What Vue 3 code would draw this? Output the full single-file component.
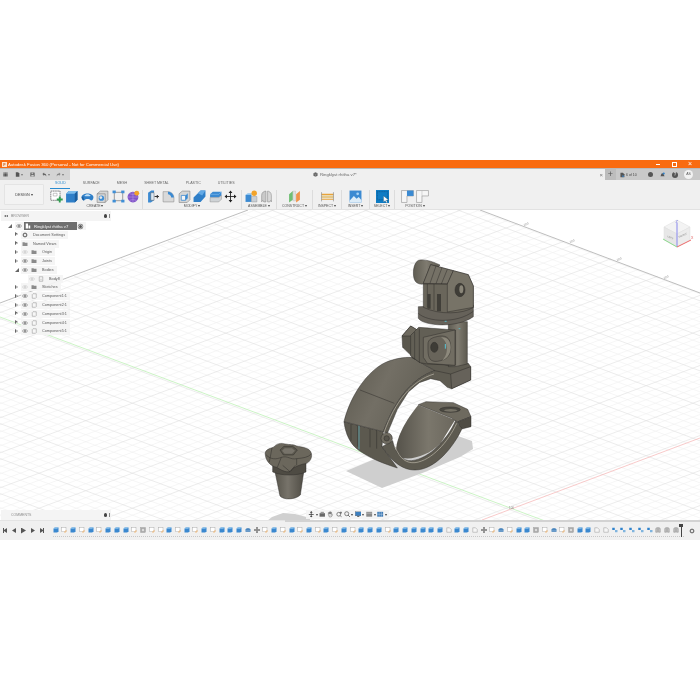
<script setup>
const tabs = ['SOLID', 'SURFACE', 'MESH', 'SHEET METAL', 'PLASTIC', 'UTILITIES']

const groups = [
  { label: 'CREATE', w: 95, icons: ['i-new', 'i-extrude', 'i-dome', 'i-hole', 'i-rect', 'i-sphere'] },
  { label: 'MODIFY', w: 99, icons: ['i-press', 'i-fillet', 'i-shell', 'i-chamfer', 'i-stack', 'i-move'] },
  { label: 'ASSEMBLE', w: 35, icons: ['i-asm', 'i-joint'] },
  { label: 'CONSTRUCT', w: 36, icons: ['i-plane'] },
  { label: 'INSPECT', w: 29, icons: ['i-measure'] },
  { label: 'INSERT', w: 28, icons: ['i-image'] },
  { label: 'SELECT', w: 25, icons: ['i-select'] },
  { label: 'POSITION', w: 40, icons: ['i-pos1', 'i-pos2'] },
]

const tree = [
  { name: 'Document Settings', arrow: 'closed', icon: 'i-gear' },
  { name: 'Named Views', arrow: 'closed', icon: 'i-folder' },
  { name: 'Origin', arrow: 'closed', eye: 'off', icon: 'i-folder' },
  { name: 'Joints', arrow: 'closed', eye: 'on', icon: 'i-folder' },
  { name: 'Bodies', arrow: 'open', eye: 'on', icon: 'i-folder' },
  { name: 'Body8', arrow: 'none', eye: 'off', icon: 'i-body', nested: true },
  { name: 'Sketches', arrow: 'closed', eye: 'off', icon: 'i-folder' },
  { name: 'Component1:1', arrow: 'closed', eye: 'on', icon: 'i-comp' },
  { name: 'Component2:1', arrow: 'closed', eye: 'on', icon: 'i-comp' },
  { name: 'Component3:1', arrow: 'closed', eye: 'on', icon: 'i-comp' },
  { name: 'Component4:1', arrow: 'closed', eye: 'on', icon: 'i-comp' },
  { name: 'Component5:1', arrow: 'closed', eye: 'on', icon: 'i-comp' },
]

const timelineCodes = 'bsbsbsbbbsgssbsbsbsbbb' + 'fmsbsbsbsbsbsbbbsbbbbbbdbbd' + 'msfsbbgsfsgbbddcccccjjj'
const timeline = timelineCodes.split('').map((c) => 't-' + c)

const navIcons = [
  { id: 'n-orbit', caret: true },
  { id: 'n-cam' },
  { id: 'n-hand' },
  { id: 'n-zoomfit' },
  { id: 'n-zoom', caret: true },
  { id: 'n-display', caret: true },
  { id: 'n-visual', caret: true },
  { id: 'n-grid', caret: true },
]

const step = 9.34
const slope = 0.375
let minor = ''
let major = ''
const seg = (x, y, dx) => `M${x.toFixed(1)} ${y.toFixed(1)}L${(x + dx).toFixed(1)} ${(y + Math.abs(dx) * slope).toFixed(1)}`
for (let n = -32; n <= 41; n++) {
  const t = 385 - n * step
  const s = seg(366 - t, 167 + slope * t, 1500)
  if (((n % 5) + 5) % 5 === 0) major += s
  else minor += s
}
for (let n = -14; n <= 56; n++) {
  const t = 525 - n * step
  const s = seg(366 + t, 167 + slope * t, -1500)
  if (((n % 5) + 5) % 5 === 0) major += s
  else minor += s
}

const ticks = [
  { x: 524, y: 226 },
  { x: 570, y: 243 },
  { x: 617, y: 261 },
  { x: 664, y: 279 },
]
</script>

<template>
  <div class="app">
    <header class="titlebar">
      <span class="logo">F</span>
      <span class="title-text">Autodesk Fusion 360 (Personal - Not for Commercial Use)</span>
      <span class="winbtn win-min"></span>
      <span class="winbtn win-max"></span>
      <span class="winbtn win-close">×</span>
    </header>

    <div class="docbar">
      <div class="quick">
        <svg class="qi"><use href="#q-grid" /></svg>
        <svg class="qi qi-doc"><use href="#q-doc" /></svg>
        <span class="caret"></span>
        <svg class="qi qi-save"><use href="#q-save" /></svg>
        <svg class="qi qi-undo"><use href="#q-undo" /></svg>
        <span class="caret"></span>
        <svg class="qi qi-redo"><use href="#q-redo" /></svg>
        <span class="caret"></span>
      </div>
      <div class="doctab">
        <svg class="doc-ico"><use href="#q-cube" /></svg>
        <span class="doc-name">Ringklyst rhitha v7*</span>
        <span class="doc-close">×</span>
      </div>
      <div class="account">
        <span class="plus">+</span>
        <svg class="ai ai-job"><use href="#q-jobs" /></svg>
        <span class="count">6 of 10</span>
        <span class="ai-dot"></span>
        <svg class="ai ai-bell"><use href="#q-bell" /></svg>
        <span class="ai-help">?</span>
        <span class="avatar">AS</span>
      </div>
    </div>

    <div class="ribbon">
      <button class="design">DESIGN <i class="caret dark"></i></button>
      <div class="ribbon-main">
        <div class="tabs">
          <span v-for="(t, i) in tabs" :key="t" class="tab" :class="{ active: i === 0 }">{{ t }}</span>
        </div>
        <div class="groups">
          <div v-for="g in groups" :key="g.label" class="group" :style="{ width: g.w + 'px' }">
            <div class="group-icons">
              <svg v-for="ic in g.icons" :key="ic" class="tool" viewBox="0 0 24 24"><use :href="'#' + ic" /></svg>
            </div>
            <div class="group-label">{{ g.label }} <i class="caret dark"></i></div>
          </div>
        </div>
      </div>
    </div>

    <main class="viewport">
      <svg class="scene" viewBox="0 210 700 310" width="700" height="310">
        <defs>
          <linearGradient id="gBand" x1="0" y1="0" x2="1" y2="0.4">
            <stop offset="0" stop-color="#5b584e" />
            <stop offset="0.5" stop-color="#736f65" />
            <stop offset="1" stop-color="#625f55" />
          </linearGradient>
          <linearGradient id="gInner" x1="0" y1="0" x2="1" y2="0">
            <stop offset="0" stop-color="#55524a" />
            <stop offset="0.55" stop-color="#7b776c" />
            <stop offset="1" stop-color="#6b675d" />
          </linearGradient>
          <linearGradient id="gCyl" x1="0" y1="0" x2="1" y2="0">
            <stop offset="0" stop-color="#5f5c52" />
            <stop offset="0.5" stop-color="#7f7b70" />
            <stop offset="1" stop-color="#5d5a50" />
          </linearGradient>
          <linearGradient id="gCone" x1="0" y1="0" x2="1" y2="0">
            <stop offset="0" stop-color="#57544b" />
            <stop offset="0.45" stop-color="#77736a" />
            <stop offset="1" stop-color="#4f4c44" />
          </linearGradient>

          <symbol id="i-new" viewBox="0 0 24 24"><rect x="1.5" y="2" width="17" height="17" fill="#fff" stroke="#555" stroke-width="1.3" stroke-dasharray="3 1" /><path d="M6 6h7v5H6z" fill="none" stroke="#999" /><path d="M18 12v11M12.5 17.500h11" stroke="#2f9e4f" stroke-width="3.400" /></symbol>
          <symbol id="i-extrude" viewBox="0 0 24 24"><path d="M2 7 7 2h16v16l-5 5H2z" fill="#2f7fc8" /><path d="M2 7 7 2h16l-5 5z" fill="#7cbcec" /><path d="M18 7l5-5v16l-5 5z" fill="#1c5f9f" /></symbol>
          <symbol id="i-dome" viewBox="0 0 24 24"><path d="M1 13C2 4 22 4 23 13c0 6-4 7-5 6-3-3-9-3-12 0-1 1-5 0-5-6z" fill="#2f7fc8" /><path d="M6 11c3-4 9-4 12 0-3 1-9 1-12 0z" fill="#bfe0f7" /><path d="M1 13c1 5 4 7 5 6l-2-7z" fill="#1c5f9f" /></symbol>
          <symbol id="i-hole" viewBox="0 0 24 24"><path d="M2 7 8 2h14v16l-5 5H2z" fill="#d6d6d6" stroke="#777" /><path d="M2 7h15v16" fill="none" stroke="#777" /><ellipse cx="10" cy="15" rx="5" ry="5" fill="#3f8fd6" /><ellipse cx="9" cy="14" rx="2.500" ry="2.500" fill="#e8e8e8" /></symbol>
          <symbol id="i-rect" viewBox="0 0 24 24"><rect x="4" y="4" width="16" height="16" fill="none" stroke="#555" stroke-width="1" /><g fill="#3f8fd6"><rect x="1" y="1" width="6" height="5" /><rect x="17" y="1" width="6" height="5" /><rect x="1" y="18" width="6" height="5" /><rect x="17" y="18" width="6" height="5" /></g></symbol>
          <symbol id="i-sphere" viewBox="0 0 24 24"><circle cx="11" cy="13" r="10" fill="#8254c8" /><path d="M1 13h20M11 3v20M4 6c4 3 10 3 14 0M4 20c4-3 10-3 14 0" stroke="#b79ae6" fill="none" /><circle cx="18" cy="6" r="4.500" fill="#f2a32a" /></symbol>
          <symbol id="i-press" viewBox="0 0 24 24"><path d="M2 5 8 1h5v18l-6 4H2z" fill="#3b8ad2" /><path d="M7 5h6v14H7z" fill="#dbe9f5" stroke="#555" stroke-width=".8" /><path d="M14 12h8M19 9v6" stroke="#333" stroke-width="2" /></symbol>
          <symbol id="i-fillet" viewBox="0 0 24 24"><path d="M2 3h9c6 0 11 5 11 11v8H2z" fill="#d9d9d9" stroke="#888" /><path d="M11 3c6 0 11 5 11 11h-5c0-3-3-6-6-6z" fill="#3b8ad2" /></symbol>
          <symbol id="i-shell" viewBox="0 0 24 24"><path d="M2 7 8 2h14v16l-5 5H2z" fill="#d6d6d6" stroke="#777" /><path d="M6 10h8v9H6z" fill="#f5f5f5" stroke="#3b8ad2" stroke-width="1.500" /><path d="M14 10l4-4v9l-4 4z" fill="#3b8ad2" /></symbol>
          <symbol id="i-chamfer" viewBox="0 0 24 24"><path d="M1 14 9 6l5-5h9v11l-9 10H1z" fill="#2f7fc8" /><path d="M9 6l5-5h9l-6 9z" fill="#62a9e6" /></symbol>
          <symbol id="i-stack" viewBox="0 0 24 24"><path d="M2 8 7 3h16v7l-5 4H2z" fill="#3b8ad2" /><path d="M2 8h16l5-5" fill="none" stroke="#8bc2ee" /><path d="M2 14h16l5-4v7l-5 5H2z" fill="#cfd3d6" stroke="#888" stroke-width=".8" /></symbol>
          <symbol id="i-move" viewBox="0 0 24 24"><path d="M12 3v18M3 12h18" stroke="#222" stroke-width="1.600" /><path d="M12 1l3.500 4.500h-7zM12 23l3.500-4.500h-7zM1 12l4.500-3.500v7zM23 12l-4.500-3.500v7z" fill="#222" /></symbol>
          <symbol id="i-asm" viewBox="0 0 24 24"><path d="M1 9h11v13H1z" fill="#3b8ad2" /><path d="M12 12h10v10H12z" fill="#c9cfd5" stroke="#888" stroke-width=".7" /><path d="M1 9l4-3h8l-1 3z" fill="#8cc2ee" /><circle cx="17" cy="6" r="5" fill="#f2a32a" /></symbol>
          <symbol id="i-joint" viewBox="0 0 24 24"><path d="M3 22V10c0-6 5-8 8-8v20H7l-2-3z" fill="#c9c9c9" stroke="#888" /><path d="M21 22V10c0-6-5-8-7-8v20h4l2-3z" fill="#d9d9d9" stroke="#888" /></symbol>
          <symbol id="i-plane" viewBox="0 0 24 24"><path d="M2 8 9 2v16l-7 5z" fill="#6fbf73" /><path d="M9 2h5v18H9z" fill="#e2e2e2" stroke="#aaa" stroke-width=".6" /><path d="M15 8l7-6v16l-7 5z" fill="#f0934a" /></symbol>
          <symbol id="i-measure" viewBox="0 0 24 24"><path d="M1 8h22M1 17h22" stroke="#e8a33a" stroke-width="2" /><rect x="1" y="10" width="22" height="5" fill="#e5c98a" /><path d="M1 4v17M23 4v17" stroke="#777" /></symbol>
          <symbol id="i-image" viewBox="0 0 24 24"><rect x="1" y="1" width="22" height="22" fill="#3b8ad2" /><path d="M1 20 9 11l5 5 4-3 5 6v4H1z" fill="#dcecf8" /><circle cx="16" cy="7" r="2.500" fill="#a8d3f5" /></symbol>
          <symbol id="i-select" viewBox="0 0 24 24"><rect x="0" y="0" width="24" height="24" fill="#0f7cc4" /><rect x="2.500" y="3" width="19" height="15" fill="none" stroke="#0a4f83" stroke-dasharray="2 1" /><path d="M14 11v11l3-2.500 2 4 2-1-2-4h4z" fill="#fff" stroke="#333" stroke-width=".4" /></symbol>
          <symbol id="i-pos1" viewBox="0 0 24 24"><path d="M1 1h22v10H11v12H1z" fill="#f6f6f6" stroke="#888" /><path d="M11 1h12v10H11z" fill="#3b8ad2" /></symbol>
          <symbol id="i-pos2" viewBox="0 0 24 24"><path d="M1 1h22v10H11v12H1z" fill="#f6f6f6" stroke="#888" /><path d="M11 11V1" stroke="#bbb" /></symbol>

          <symbol id="i-gear" viewBox="0 0 24 24"><circle cx="12" cy="12" r="6.500" fill="none" stroke="#777" stroke-width="4" /><path d="M12 1v5M12 18v5M1 12h5M18 12h5M4 4l4 4M16 16l4 4M20 4l-4 4M8 16l-4 4" stroke="#777" stroke-width="3" /></symbol>
          <symbol id="i-folder" viewBox="0 0 24 24"><path d="M2 5h8l2 2h10v13H2z" fill="#8b8b8b" /></symbol>
          <symbol id="i-comp" viewBox="0 0 24 24"><path d="M5 6l3-3h13v15l-3 3H5z" fill="#f7f7f7" stroke="#888" stroke-width="2" /></symbol>
          <symbol id="i-body" viewBox="0 0 24 24"><path d="M5 3h14v18H5z" fill="#f7f7f7" stroke="#888" stroke-width="2" /><path d="M12 11v6" stroke="#888" stroke-width="2" /></symbol>
          <symbol id="i-eye" viewBox="0 0 24 24"><path d="M1 12c6-8 16-8 22 0-6 8-16 8-22 0z" fill="none" stroke="currentColor" stroke-width="2.500" /><circle cx="12" cy="12" r="4" fill="currentColor" /></symbol>
          <symbol id="i-docwhite" viewBox="0 0 24 24"><path d="M3 2h9v20H3z" fill="#fff" /><path d="M14 10h7v12h-7z" fill="#fff" /></symbol>

          <symbol id="t-b" viewBox="0 0 24 24"><path d="M2 7 7 2h15v15l-5 5H2z" fill="#3a88cf" /><path d="M2 7 7 2h15l-5 5z" fill="#8ec3ec" /></symbol>
          <symbol id="t-s" viewBox="0 0 24 24"><rect x="3" y="3" width="17" height="16" fill="#fff" stroke="#9a9a9a" stroke-width="1.500" /><path d="M20 12v8h-8" fill="none" stroke="#f0ae62" stroke-width="3" /></symbol>
          <symbol id="t-f" viewBox="0 0 24 24"><path d="M2 9c2-6 18-6 20 0v10H2z" fill="#3c7cb8" /><path d="M2 13h20" stroke="#b9d5ec" stroke-width="2" /></symbol>
          <symbol id="t-m" viewBox="0 0 24 24"><path d="M12 2v20M2 12h20" stroke="#333" stroke-width="2.500" /><path d="M12 0l4 5H8zM12 24l4-5H8zM0 12l5-4v8zM24 12l-5-4v8z" fill="#333" /></symbol>
          <symbol id="t-g" viewBox="0 0 24 24"><rect x="2" y="2" width="20" height="20" fill="#a9a9a9" stroke="#7b7b7b" /><circle cx="12" cy="12" r="5" fill="#dcdcdc" /></symbol>
          <symbol id="t-d" viewBox="0 0 24 24"><path d="M3 3h11l7 7v11H3z" fill="#f6f6f6" stroke="#7b7b7b" stroke-width="1.500" /></symbol>
          <symbol id="t-c" viewBox="0 0 24 24"><rect x="1" y="3" width="10" height="9" fill="#2f82cc" /><rect x="12" y="12" width="10" height="9" fill="#7fb4de" /></symbol>
          <symbol id="t-j" viewBox="0 0 24 24"><path d="M3 21V9c0-5 4-7 7-7v19zM21 21V9c0-5-4-7-7-7v19z" fill="#c2c2c2" stroke="#6f6f6f" stroke-width="1.500" /></symbol>

          <symbol id="n-orbit" viewBox="0 0 24 24"><path d="M12 3v18M3 13h18" stroke="#444" stroke-width="3" /><path d="M12 0l5 6H7zM12 24l-5-6h10z" fill="#444" /></symbol>
          <symbol id="n-cam" viewBox="0 0 24 24"><rect x="2" y="8" width="20" height="13" fill="#666" /><rect x="6" y="3" width="12" height="6" fill="#999" /></symbol>
          <symbol id="n-hand" viewBox="0 0 24 24"><path d="M5 13V6h3v5-7h3v7-8h3v8-6h3v9l2-2 2 2-6 9H9z" fill="#d8d8d8" stroke="#555" stroke-width="1.500" /></symbol>
          <symbol id="n-zoomfit" viewBox="0 0 24 24"><circle cx="10" cy="12" r="7" fill="none" stroke="#555" stroke-width="2.500" /><path d="M15 17l6 5M18 2v9M14 6h8" stroke="#555" stroke-width="2.500" /></symbol>
          <symbol id="n-zoom" viewBox="0 0 24 24"><circle cx="10" cy="10" r="7.500" fill="#eee" stroke="#555" stroke-width="2.500" /><path d="M15 15l7 7" stroke="#555" stroke-width="3" /></symbol>
          <symbol id="n-display" viewBox="0 0 24 24"><rect x="1" y="3" width="22" height="15" fill="#3b7fc0" stroke="#555" /><rect x="8" y="18" width="8" height="4" fill="#666" /></symbol>
          <symbol id="n-visual" viewBox="0 0 24 24"><rect x="1" y="3" width="22" height="18" fill="#8a8a8a" /><path d="M1 8h22" stroke="#d6d6d6" stroke-width="2" /></symbol>
          <symbol id="n-grid" viewBox="0 0 24 24"><rect x="1" y="3" width="22" height="18" fill="#3b78b4" /><path d="M8 3v18M16 3v18M1 12h22" stroke="#dbe8f3" stroke-width="1.500" /></symbol>

          <symbol id="q-grid" viewBox="0 0 24 24"><path d="M2 2h6v6H2zM9 2h6v6H9zM16 2h6v6h-6zM2 9h6v6H2zM9 9h6v6H9zM16 9h6v6h-6zM2 16h6v6H2zM9 16h6v6H9zM16 16h6v6h-6z" fill="#555" /></symbol>
          <symbol id="q-doc" viewBox="0 0 24 24"><path d="M4 1h11l6 6v16H4z" fill="#555" /></symbol>
          <symbol id="q-save" viewBox="0 0 24 24"><path d="M2 2h18l2 2v18H2z" fill="#555" /><rect x="7" y="3" width="9" height="6" fill="#ccc" /><rect x="6" y="13" width="12" height="9" fill="#ccc" /></symbol>
          <symbol id="q-undo" viewBox="0 0 24 24"><path d="M2 9l8-7v5c8 0 12 6 10 14-2-5-5-7-10-7v5z" fill="#666" /></symbol>
          <symbol id="q-redo" viewBox="0 0 24 24"><path d="M22 9l-8-7v5C6 7 2 13 4 21c2-5 5-7 10-7v5z" fill="#888" /></symbol>
          <symbol id="q-cube" viewBox="0 0 24 24"><path d="M12 1l10 5v12l-10 5-10-5V6z" fill="#666" /><path d="M12 12v11M2 6l10 6 10-6" stroke="#ddd" fill="none" /></symbol>
          <symbol id="q-jobs" viewBox="0 0 24 24"><path d="M2 1h12l7 7v15H2z" fill="#555" /><path d="M12 12l9 6-9 5z" fill="#3b8ad2" /></symbol>
          <symbol id="q-bell" viewBox="0 0 24 24"><path d="M12 3c5 0 7 4 7 9l3 6H2l3-6c0-5 2-9 7-9z" fill="#555" /><circle cx="18" cy="5" r="5" fill="#2f82cc" /></symbol>
        </defs>

        <path :d="minor" class="grid-minor" />
        <path :d="major" class="grid-major" />
        <path d="M0 317 L545 521" class="axis-green" />
        <path d="M482 520 L700 438" class="axis-red" />
        <path d="M0 303 L248 210" class="edge" />
        <path d="M480 210 L700 293" class="edge" />
        <text v-for="t in ticks" :key="t.x" :x="t.x" :y="t.y" class="tick" :transform="`rotate(-20 ${t.x} ${t.y})`">100</text>
        <text x="509" y="509" class="tick">100</text>

        <!-- floor shadows -->
        <path d="M346 471 382 488 425 472 460 457 473 449 472 441 458 436 420 440z" fill="#cfcfcf" />
        <path d="M267 521 272 517 283 513 295 514 310 518 310 521z" fill="#d0d0d0" />

        <!-- clamp and mount, drawn on a 3x grid -->
        <g transform="translate(340 250) scale(.33333)" stroke="#2b2a26" stroke-width="1.400" stroke-linejoin="round">
          <!-- inner wall -->
          <path d="M235 465C198 510 165 565 168 612 190 640 262 622 302 580L345 510z" fill="url(#gInner)" stroke="none" />
          <!-- lower arm tongue -->
          <path d="M235 464 258 455 340 458 383 478 393 500 352 516 334 504z" fill="#6e6a5f" />
          <ellipse cx="330" cy="479" rx="31" ry="8" fill="#4a4841" />
          <ellipse cx="332" cy="481" rx="20" ry="4" fill="#767266" stroke="none" />
          <path d="M393 500 393 530 365 537 352 516z" fill="#4f4c44" />
          <!-- lower left band -->
          <path d="M12 515 130 545 126 590 172 654C130 640 95 628 55 600 30 582 16 550 12 515z" fill="#5c594f" />
          <path d="M33 522V572M53 526V590M90 536V592M110 541V596" fill="none" />
          <path d="M57 524V598" stroke="#63c2d2" stroke-width="2" />
          <!-- front rim lower -->
          <path d="M126 590C160 640 190 660 225 660 285 660 340 592 366 536L347 512C320 570 270 625 215 632 190 635 165 610 158 572z" fill="#5d5a50" />
          <path d="M165 590C180 628 200 640 225 638 275 632 325 575 350 520" fill="none" stroke="#a9a598" stroke-width="2.500" />

          <!-- band outer -->
          <path d="M12 515C30 440 80 365 135 338 165 325 190 322 215 322L285 362C215 385 165 450 130 545z" fill="url(#gBand)" />
          <path d="M60 420 163 460" fill="none" />
          <!-- top arm -->
          <path d="M215 322 320 345 385 340 392 350 392 390 335 416 322 412 300 392 272 386 238 398 205 426 172 478 142 550 130 545C165 450 215 385 285 362z" fill="#5f5c52" />
          <path d="M335 416 332 372 392 350 392 390z" fill="#66625a" />
          <path d="M285 362 332 372" fill="none" />
          <path d="M132 548C165 455 215 392 282 372" fill="none" stroke="#a9a598" stroke-width="2.500" />
          <!-- hinge pin -->
          <circle cx="140" cy="565" r="17" fill="#6f6b60" />
          <circle cx="140" cy="565" r="8" fill="#57544b" />

          <!-- stem -->
          <path d="M325 215H382V342L345 350H325z" fill="url(#gCyl)" />
          <!-- side bracket -->
          <path d="M186 258 212 228 232 240 222 325 188 292z" fill="#5a574d" />
          <path d="M212 228 232 240 212 258 186 258z" fill="#6f6b60" />
          <path d="M212 256 236 232 346 240 346 346 262 342 240 338 212 318z" fill="#625f55" />
          <path d="M224 246V328M238 236V338" fill="none" />
          <path d="M250 262 345 240 345 346 262 340 250 322z" fill="#716d62" />
          <path d="M264 282C264 268 276 262 300 258 322 256 332 268 332 292 332 320 318 330 292 334 272 336 264 326 264 300z" fill="#68645a" />
          <path d="M302 262C322 270 330 310 306 332 320 326 332 315 332 292 332 272 322 260 302 262z" fill="#8d897c" stroke="none" />
          <ellipse cx="283" cy="292" rx="11" ry="15" fill="#3e3c36" />
          <path d="M316 282v14" stroke="#57c5d8" stroke-width="3" />

          <!-- collar -->
          <path d="M235 170V205C250 228 350 236 400 200V165z" fill="#66625a" />
          <path d="M235 190C262 216 350 222 400 184" fill="none" />
          <path d="M314 214h6M356 236h5" stroke="#57c5d8" stroke-width="2.500" />
          <!-- left cylinder -->
          <path d="M240 30C225 30 216 60 222 85 226 100 238 104 252 102L300 45C285 38 262 28 240 30z" fill="url(#gCyl)" />
          <!-- GoPro mount -->
          <path d="M250 100 272 44 385 74 400 108V172C370 192 300 196 250 172z" fill="#6a665b" />
          <path d="M272 44 340 62 322 102 250 100z" fill="#757166" />
          <path d="M288 48 270 100M306 53 288 101M322 58 304 102" fill="none" />
          <path d="M322 102 340 62 385 74 400 108V172L322 186z" fill="#777367" />
          <path d="M322 102H250M282 102V180M262 102V172" fill="none" />
          <path d="M262 132h10v44h-10zM291 132h12v52h-12z" fill="#413f39" stroke="none" />
          <ellipse cx="360" cy="120" rx="15" ry="20" fill="#3f3d37" />
          <ellipse cx="364" cy="118" rx="6" ry="12" fill="#8a8679" stroke="none" />
        </g>

        <!-- knob, drawn on a 3x grid -->
        <g transform="translate(240 440) scale(.33333)" stroke="#2b2a26" stroke-width="1.400" stroke-linejoin="round">
          <path d="M104 90 192 90 181 165C165 180 130 180 120 168z" fill="url(#gCone)" />
          <path d="M98 66H198V96C172 108 124 108 98 96z" fill="#4e4b43" />
          <path d="M76 45C72 30 90 25 100 22 110 10 125 8 135 12 150 15 160 12 170 18 185 22 210 22 214 40 218 58 205 72 190 72 170 78 160 82 150 95 135 98 120 88 110 82 95 80 78 65 76 45z" fill="#6b675c" />
          <path d="M78 44C92 60 110 58 124 52 145 46 150 60 170 56 190 54 205 52 214 42" fill="none" />
          <path d="M96 24 88 66M124 52 112 82M170 56V76M128 76 150 95 166 76" fill="none" />
          <path d="M120 30 132 19H158L172 30 160 45H130z" fill="#5a574d" />
          <path d="M126 32 134 25H156L165 32 156 41H134z" fill="#77736a" stroke="none" />
        </g>

        <!-- view cube -->
        <g class="cube">
          <path d="M664 227 677 220 690 227 677 234z" fill="#f3f3f3" stroke="#ddd" stroke-width=".5" />
          <path d="M664 227 677 234V247L664 240z" fill="#e7e7e7" stroke="#ddd" stroke-width=".5" />
          <path d="M690 227 677 234V247L690 240z" fill="#ececec" stroke="#ddd" stroke-width=".5" />
          <path d="M677 247V223" stroke="#a5a5ee" stroke-width="1.400" />
          <path d="M677 247 691 240" stroke="#ee6a6a" stroke-width="1" />
          <path d="M677 247 663 239" stroke="#8fdc8f" stroke-width="1" />
          <text x="675.500" y="223" class="cube-z">Z</text>
          <text x="691" y="239" class="cube-x">X</text>
          <text x="667" y="237" class="cube-t" transform="rotate(25 667 237)">LEFT</text>
          <text x="679" y="238" class="cube-t" transform="rotate(-25 679 238)">FRONT</text>
        </g>
      </svg>

      <aside class="panel browser">
        <div class="panel-head">
          <span class="collapse">◂◂</span>
          <span class="panel-title">BROWSER</span>
          <span class="dot"></span>
          <span class="bar"></span>
        </div>
        <div class="row root">
          <span class="tri-open dark"></span>
          <span class="pill">
            <svg class="ri eye on" viewBox="0 0 24 24"><use href="#i-eye" /></svg>
            <span class="root-box">
              <svg class="ri" viewBox="0 0 24 24"><use href="#i-docwhite" /></svg>
              <span>Ringklyst rhitha v7</span>
            </span>
            <span class="radio"></span>
          </span>
        </div>
        <div v-for="r in tree" :key="r.name" class="row" :class="{ nested: r.nested }">
          <span v-if="r.arrow === 'closed'" class="tri-closed"></span>
          <span v-else-if="r.arrow === 'open'" class="tri-open"></span>
          <span v-else class="tri-none"></span>
          <span class="pill">
            <svg v-if="r.eye" class="ri eye" :class="r.eye" viewBox="0 0 24 24"><use href="#i-eye" /></svg>
            <svg class="ri" :class="{ plain: !r.eye }" viewBox="0 0 24 24"><use :href="'#' + r.icon" /></svg>
            <span class="row-name">{{ r.name }}</span>
          </span>
        </div>
      </aside>

      <aside class="panel comments">
        <div class="panel-head">
          <span class="panel-title">COMMENTS</span>
          <span class="dot"></span>
          <span class="bar"></span>
        </div>
      </aside>

      <nav class="navbar">
        <span v-for="n in navIcons" :key="n.id" class="nav-item">
          <svg class="nav-ico" viewBox="0 0 24 24"><use :href="'#' + n.id" /></svg>
          <i v-if="n.caret" class="caret dark"></i>
        </span>
      </nav>
    </main>

    <footer class="timeline">
      <div class="player">
        <span class="pl skip-l"></span>
        <span class="pl back"></span>
        <span class="pl play"></span>
        <span class="pl fwd"></span>
        <span class="pl skip-r"></span>
      </div>
      <div class="track">
        <svg v-for="(t, i) in timeline" :key="i" class="step" viewBox="0 0 24 24"><use :href="'#' + t" /></svg>
        <span class="playhead"></span>
      </div>
      <svg class="gear" viewBox="0 0 24 24"><use href="#i-gear" /></svg>
    </footer>
  </div>
</template>

<style scoped>
.app {
  margin-top: 160px;
  width: 700px;
  height: 380px;
  display: flex;
  flex-direction: column;
  font-family: "Liberation Sans", Arial, sans-serif;
  color: #555;
  filter: blur(0.4px);
}

.caret {
  display: inline-block;
  width: 0;
  height: 0;
  border-left: 1.500px solid transparent;
  border-right: 1.500px solid transparent;
  border-top: 2px solid #777;
  vertical-align: middle;
}
.caret.dark { border-top-color: #444; }

.titlebar {
  height: 8px;
  flex: none;
  background: #f96b10;
  display: flex;
  align-items: center;
  color: #fff;
  font-size: 4.300px;
  padding-left: 2px;
}
.logo {
  width: 5px;
  height: 5px;
  background: #fbe3cf;
  color: #d05a10;
  font-size: 4px;
  line-height: 5px;
  text-align: center;
  margin-right: 1px;
  font-weight: bold;
}
.title-text { flex: 1; }
.winbtn {
  width: 16px;
  display: flex;
  justify-content: center;
  align-items: center;
}
.win-min::before {
  content: "";
  width: 3.500px;
  height: 0.7px;
  background: #fff;
}
.win-max::before {
  content: "";
  width: 3px;
  height: 3px;
  border: 0.7px solid #fff;
}
.win-close {
  font-size: 7px;
  line-height: 8px;
  margin-right: 2px;
}

.docbar {
  height: 12px;
  flex: none;
  display: flex;
  background: #f0f0f0;
  border-top: 1px solid #b9b9b9;
  box-sizing: border-box;
}
.quick {
  width: 70px;
  background: #d4d4d4;
  display: flex;
  align-items: center;
  padding-left: 3px;
  box-sizing: border-box;
}
.qi {
  width: 5px;
  height: 5px;
}
.qi-doc { margin-left: 7px; margin-right: 1px; }
.qi-save { margin-left: 7px; }
.qi-undo { margin-left: 7px; margin-right: 1px; }
.qi-redo { margin-left: 6px; margin-right: 1px; }

.doctab {
  width: 535px;
  position: relative;
  display: flex;
  align-items: center;
  padding-left: 243px;
  box-sizing: border-box;
}
.doc-ico { width: 5px; height: 5px; margin-right: 2px; }
.doc-name { font-size: 4.300px; color: #666; }
.doc-close {
  margin-left: auto;
  margin-right: 2px;
  font-size: 6px;
  color: #777;
}
.account {
  flex: 1;
  background: #c9c9c9;
  display: flex;
  align-items: center;
  position: relative;
}
.plus {
  width: 11px;
  height: 11px;
  line-height: 10px;
  text-align: center;
  font-size: 9px;
  color: #555;
  background: #bdbdbd;
  margin-right: 4px;
}
.ai { width: 5px; height: 6px; }
.count {
  font-size: 3.500px;
  margin-left: 1px;
  width: 22px;
  color: #444;
}
.ai-dot {
  width: 5px;
  height: 5px;
  border-radius: 50%;
  background: #555;
  margin-right: 7px;
}
.ai-bell { margin-right: 7px; }
.ai-help {
  width: 6px;
  height: 6px;
  border-radius: 50%;
  background: #555;
  color: #eee;
  font-size: 4.500px;
  line-height: 6px;
  text-align: center;
  margin-right: 6px;
}
.avatar {
  width: 9px;
  height: 9px;
  border-radius: 50%;
  background: #f2f2f2;
  font-size: 3.500px;
  line-height: 9px;
  text-align: center;
  color: #555;
}

.ribbon {
  height: 30px;
  flex: none;
  background: #f0f0f0;
  border-bottom: 1px solid #e2e2e2;
  box-sizing: border-box;
  display: flex;
  padding-left: 4px;
}
.design {
  width: 40px;
  height: 21px;
  margin-top: 4px;
  background: #f3f3f3;
  border: 1px solid #e4e4e4;
  border-radius: 1px;
  font: 3.800px "Liberation Sans", Arial, sans-serif;
  color: #444;
  padding: 0;
}
.ribbon-main {
  margin-left: 4px;
  flex: 1;
  display: flex;
  flex-direction: column;
}
.tabs {
  display: flex;
  gap: 17px;
  height: 9px;
  align-items: flex-end;
  padding-left: 2px;
  font-size: 3.600px;
  color: #666;
  flex: none;
}
.tab {
  line-height: 7px;
  height: 9px;
  box-sizing: border-box;
  white-space: nowrap;
}
.tab.active {
  color: #2a8bd0;
  padding: 0 4px 0 5px;
  margin-right: -4px;
  border-bottom: 1px solid #2a8bd0;
}
.groups {
  display: flex;
  height: 19px;
  margin-top: 1px;
}
.group {
  flex: none;
  border-right: 1px solid #dcdcdc;
  box-sizing: border-box;
  display: flex;
  flex-direction: column;
  align-items: center;
}
.group:last-child { border-right: 0; }
.group-icons {
  display: flex;
  gap: 2.500px;
  height: 14px;
  align-items: center;
  justify-content: center;
}
.tool {
  width: 13px;
  height: 13px;
  flex: none;
}
.group-label {
  font-size: 3.500px;
  line-height: 5px;
  margin-top: 1px;
  color: #555;
  white-space: nowrap;
}

.viewport {
  flex: none;
  height: 310px;
  position: relative;
  background: #fff;
  overflow: hidden;
}
.scene {
  display: block;
}
.grid-minor { stroke: #f0f0f0; stroke-width: 0.6; fill: none; }
.grid-major { stroke: #dfdfdf; stroke-width: 0.6; fill: none; }
.axis-green { stroke: #b6efae; stroke-width: 0.7; fill: none; }
.axis-red { stroke: #f5b3b3; stroke-width: 0.7; fill: none; }
.edge { stroke: #a2a2a2; stroke-width: 0.7; fill: none; }
.tick {
  font-size: 3px;
  fill: #888;
  font-family: "Liberation Sans", Arial, sans-serif;
}
.cube-z { font-size: 4px; fill: #6f6fe0; font-family: "Liberation Sans", Arial, sans-serif; }
.cube-x { font-size: 3.500px; fill: #e05a5a; font-family: "Liberation Sans", Arial, sans-serif; }
.cube-t { font-size: 2.600px; fill: #888; font-family: "Liberation Sans", Arial, sans-serif; }

.panel {
  position: absolute;
  left: 1px;
  width: 110px;
}
.browser { top: 0.5px; }
.comments { bottom: 0.5px; }
.panel-head {
  height: 10.500px;
  background: #f4f4f4;
  display: flex;
  align-items: center;
  box-sizing: border-box;
  padding-left: 3px;
  position: relative;
}
.comments .panel-head {
  padding-left: 10px;
  height: 9.500px;
}
.collapse {
  font-size: 3.500px;
  color: #555;
  width: 7px;
}
.panel-title {
  font-size: 3.500px;
  color: #8c8c8c;
  flex: 1;
}
.dot {
  width: 3.500px;
  height: 3.500px;
  border-radius: 50%;
  background: #444;
  margin-right: 2px;
}
.bar {
  width: 0.8px;
  height: 4px;
  background: #888;
  margin-right: 1px;
}

.row {
  height: 8.770px;
  display: flex;
  align-items: center;
  padding-left: 12px;
  font-size: 3.800px;
  color: #5a5a5a;
}
.row.nested { padding-left: 12px; }
.row.nested .tri-none { width: 15px; }
.row.root {
  padding-left: 5px;
  height: 9px;
  margin-top: 0.5px;
}
.pill {
  display: flex;
  align-items: center;
  height: 8px;
  background: rgba(244, 244, 244, 0.92);
  padding-right: 3px;
}
.row.root .pill { padding-right: 1px; margin-left: 0.5px; }
.tri-closed, .tri-open, .tri-none {
  width: 8px;
  height: 8px;
  flex: none;
  position: relative;
  display: block;
}
.tri-closed::before {
  content: "";
  position: absolute;
  left: 2px;
  top: 1.500px;
  width: 0;
  height: 0;
  border-left: 3.500px solid #666;
  border-top: 2.500px solid transparent;
  border-bottom: 2.500px solid transparent;
}
.tri-closed::after {
  content: "";
  position: absolute;
  left: 3px;
  top: 3px;
  width: 0;
  height: 0;
  border-left: 1.600px solid #fff;
  border-top: 1px solid transparent;
  border-bottom: 1px solid transparent;
}
.tri-open::before {
  content: "";
  position: absolute;
  left: 2px;
  top: 2px;
  width: 0;
  height: 0;
  border-right: 4px solid #666;
  border-top: 4px solid transparent;
}
.ri {
  width: 6px;
  height: 6px;
  margin: 0 1px;
  flex: none;
}
.eye { color: #777; }
.eye.off { color: #ccc; }
.eye + .ri { margin-left: 2px; }
.ri.plain { margin-right: 5px; }
.row-name {
  margin-left: 4px;
  white-space: nowrap;
}
.ri.plain + .row-name { margin-left: 0; }
.root-box {
  display: flex;
  align-items: center;
  width: 53px;
  height: 7.500px;
  font-size: 4.200px;
  background: #6f6f6f;
  color: #f5f5f5;
  margin-left: 1.500px;
  white-space: nowrap;
}
.root-box .ri { margin-right: 3px; }
.radio {
  width: 3px;
  height: 3px;
  border-radius: 50%;
  background: #555;
  box-shadow: 0 0 0 0.6px #f4f4f4, 0 0 0 1.200px #777;
  margin: 0 3px 0 2px;
}

.navbar {
  position: absolute;
  left: 306px;
  bottom: 1px;
  height: 9px;
  display: flex;
  align-items: center;
  gap: 1.700px;
  padding: 0 2px;
  background: rgba(244, 244, 244, 0.9);
}
.nav-item {
  display: flex;
  align-items: center;
  gap: 1px;
}
.nav-ico {
  width: 6.500px;
  height: 6.500px;
}

.timeline {
  flex: 1;
  background: #f0f0f0;
  position: relative;
  display: flex;
  align-items: center;
  border-top: 1px solid #e4e4e4;
  box-sizing: border-box;
}
.timeline::before {
  content: "";
  position: absolute;
  top: -1px;
  left: 285px;
  right: 0;
  height: 2px;
  background: #d2d2d2;
}
.player {
  width: 52.700px;
  padding-left: 3px;
  box-sizing: border-box;
  display: flex;
  gap: 5px;
  align-items: center;
  flex: none;
}
.pl {
  width: 4px;
  height: 5px;
  background: #555;
}
.skip-l { clip-path: polygon(0 0, 25% 0, 25% 40%, 100% 0, 100% 100%, 25% 60%, 25% 100%, 0 100%); }
.skip-r { clip-path: polygon(0 0, 75% 40%, 75% 0, 100% 0, 100% 100%, 75% 100%, 75% 60%, 0 100%); }
.back { clip-path: polygon(100% 0, 100% 100%, 0 50%); }
.fwd { clip-path: polygon(0 0, 100% 50%, 0 100%); }
.play { clip-path: polygon(0 0, 100% 50%, 0 100%); width: 5px; height: 6px; }
.track {
  flex: none;
  width: 631px;
  height: 13px;
  padding-top: 3px;
  position: relative;
  display: flex;
  gap: 2.740px;
  align-items: flex-start;
  border-bottom: 1px dotted #c8c8c8;
  box-sizing: border-box;
}
.step {
  width: 6px;
  height: 6px;
  flex: none;
}
.playhead {
  position: absolute;
  left: 628px;
  top: 0;
  width: 1px;
  height: 13px;
  background: #444;
}
.playhead::before {
  content: "";
  position: absolute;
  left: -1.500px;
  top: 0;
  width: 4px;
  height: 3px;
  background: #444;
}
.gear {
  width: 6px;
  height: 6px;
  margin-left: 5px;
  flex: none;
}
</style>
